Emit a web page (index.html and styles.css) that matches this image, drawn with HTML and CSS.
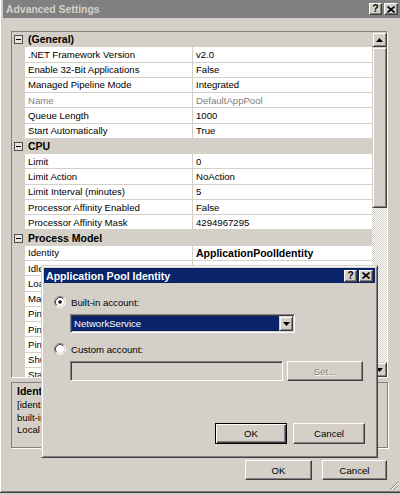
FILE: index.html
```html
<!DOCTYPE html>
<html>
<head>
<meta charset="utf-8">
<title>Advanced Settings</title>
<link rel="stylesheet" href="styles.css">
</head>
<body>
<div class="window">
  <div class="titlebar">
    <span class="title">Advanced Settings</span>
    <div class="caption-btns">
      <span class="cbtn help">?</span>
      <span class="cbtn close"><svg width="8" height="7" viewBox="0 0 8 7"><path d="M0.5 0.5 L7.5 6.5 M7.5 0.5 L0.5 6.5" stroke="#000" stroke-width="1.6"/></svg></span>
    </div>
  </div>

  <div class="main">
    <div class="grid">
      <div class="rows">
        <div class="row cat"><span class="gut"><i class="toggle"></i></span><span class="name">(General)</span></div>
        <div class="row"><span class="gut"></span><span class="name">.NET Framework Version</span><span class="val">v2.0</span></div>
        <div class="row"><span class="gut"></span><span class="name">Enable 32-Bit Applications</span><span class="val">False</span></div>
        <div class="row"><span class="gut"></span><span class="name">Managed Pipeline Mode</span><span class="val">Integrated</span></div>
        <div class="row ro"><span class="gut"></span><span class="name">Name</span><span class="val">DefaultAppPool</span></div>
        <div class="row"><span class="gut"></span><span class="name">Queue Length</span><span class="val">1000</span></div>
        <div class="row"><span class="gut"></span><span class="name">Start Automatically</span><span class="val">True</span></div>
        <div class="row cat"><span class="gut"><i class="toggle"></i></span><span class="name">CPU</span></div>
        <div class="row"><span class="gut"></span><span class="name">Limit</span><span class="val">0</span></div>
        <div class="row"><span class="gut"></span><span class="name">Limit Action</span><span class="val">NoAction</span></div>
        <div class="row"><span class="gut"></span><span class="name">Limit Interval (minutes)</span><span class="val">5</span></div>
        <div class="row"><span class="gut"></span><span class="name">Processor Affinity Enabled</span><span class="val">False</span></div>
        <div class="row"><span class="gut"></span><span class="name">Processor Affinity Mask</span><span class="val">4294967295</span></div>
        <div class="row cat"><span class="gut"><i class="toggle"></i></span><span class="name">Process Model</span></div>
        <div class="row"><span class="gut"></span><span class="name">Identity</span><span class="val strong">ApplicationPoolIdentity</span></div>
        <div class="row"><span class="gut"></span><span class="name">Idle Time-out (minutes)</span><span class="val">20</span></div>
        <div class="row"><span class="gut"></span><span class="name">Load User Profile</span><span class="val">False</span></div>
        <div class="row"><span class="gut"></span><span class="name">Maximum Worker Processes</span><span class="val">1</span></div>
        <div class="row"><span class="gut"></span><span class="name">Ping Enabled</span><span class="val">True</span></div>
        <div class="row"><span class="gut"></span><span class="name">Ping Maximum Response Time (seconds)</span><span class="val">90</span></div>
        <div class="row"><span class="gut"></span><span class="name">Ping Period (seconds)</span><span class="val">30</span></div>
        <div class="row"><span class="gut"></span><span class="name">Shutdown Time Limit (seconds)</span><span class="val">90</span></div>
        <div class="row"><span class="gut"></span><span class="name">Startup Time Limit (seconds)</span><span class="val">90</span></div>
      </div>
      <div class="vscroll">
        <div class="sbtn"><svg width="7" height="4" viewBox="0 0 7 4"><path d="M3.5 0 L7 4 L0 4 Z" fill="#000"/></svg></div>
        <div class="thumb"></div>
        <div class="track"></div>
        <div class="sbtn"><svg width="7" height="4" viewBox="0 0 7 4"><path d="M0 0 L7 0 L3.5 4 Z" fill="#000"/></svg></div>
      </div>
    </div>

    <div class="desc">
      <div class="desc-title">Identity</div>
      <div class="desc-line">[identityType, username, password] Configures the application pool to run as</div>
      <div class="desc-line">built-in account, i.e. Application Pool Identity (recommended), Network Service,</div>
      <div class="desc-line">Local System, Local Service, or as a specific user identity.</div>
    </div>

    <div class="actions">
      <button class="btn main-ok">OK</button>
      <button class="btn main-cancel">Cancel</button>
    </div>
  </div>

  <svg class="grip" width="10" height="10" viewBox="0 0 10 10">
    <path d="M9 1 L1 9 M9 5 L5 9" stroke="#808080" stroke-width="1"/>
    <path d="M9 2 L2 9 M9 6 L6 9" stroke="#fff" stroke-width="1"/>
  </svg>

  <div class="dialog">
    <div class="dtitle">
      <span>Application Pool Identity</span>
      <div class="caption-btns">
        <span class="cbtn dhelp">?</span>
        <span class="cbtn dclose"><svg width="8" height="7" viewBox="0 0 8 7"><path d="M0.5 0.5 L7.5 6.5 M7.5 0.5 L0.5 6.5" stroke="#000" stroke-width="1.6"/></svg></span>
      </div>
    </div>
    <div class="dbody">
      <div class="radio-row">
        <svg class="radio" width="12" height="12" viewBox="0 0 12 12">
          <circle cx="6" cy="6" r="5" fill="#fff"/>
          <path d="M2.11 9.89 A5.5 5.5 0 0 1 9.89 2.11" stroke="#808080" fill="none"/>
          <path d="M9.89 2.11 A5.5 5.5 0 0 1 2.11 9.89" stroke="#fff" fill="none"/>
          <path d="M2.82 9.18 A4.5 4.5 0 0 1 9.18 2.82" stroke="#404040" fill="none"/>
          <path d="M9.18 2.82 A4.5 4.5 0 0 1 2.82 9.18" stroke="#d4d0c8" fill="none"/>
          <circle cx="6" cy="6" r="1.8" fill="#000"/>
        </svg>
        <span>Built-in account:</span>
      </div>
      <div class="combo">
        <span class="combo-sel">NetworkService</span>
        <span class="combo-btn"><svg width="7" height="4" viewBox="0 0 7 4"><path d="M0 0 L7 0 L3.5 4 Z" fill="#000"/></svg></span>
      </div>
      <div class="radio-row second">
        <svg class="radio" width="12" height="12" viewBox="0 0 12 12">
          <circle cx="6" cy="6" r="5" fill="#fff"/>
          <path d="M2.11 9.89 A5.5 5.5 0 0 1 9.89 2.11" stroke="#808080" fill="none"/>
          <path d="M9.89 2.11 A5.5 5.5 0 0 1 2.11 9.89" stroke="#fff" fill="none"/>
          <path d="M2.82 9.18 A4.5 4.5 0 0 1 9.18 2.82" stroke="#404040" fill="none"/>
          <path d="M9.18 2.82 A4.5 4.5 0 0 1 2.82 9.18" stroke="#d4d0c8" fill="none"/>
        </svg>
        <span>Custom account:</span>
      </div>
      <div class="custom">
        <span class="textfield"></span>
        <button class="btn set" disabled>Set...</button>
      </div>
      <div class="dbtns">
        <button class="btn def">OK</button>
        <button class="btn dcancel">Cancel</button>
      </div>
    </div>
  </div>
</div>
</body>
</html>
```

FILE: styles.css
```css
html, body {
  margin: 0;
  padding: 0;
}
body {
  width: 400px;
  height: 495px;
  overflow: hidden;
  background: #d4d0c8;
  font-family: "Liberation Sans", Arial, sans-serif;
  font-size: 9.6px;
  color: #000;
}
.window {
  position: relative;
  width: 400px;
  height: 493px;
  box-sizing: border-box;
  border-bottom: 1px solid #404040;
  box-shadow: inset 1px 0 #ffffff, inset 0 -1px #808080;
  background: #d4d0c8;
}

/* title bars */
.titlebar {
  height: 18px;
  margin-left: 3px;
  background: #808080;
  display: flex;
  align-items: center;
  justify-content: space-between;
  padding: 0 2px 0 3px;
}
.title {
  color: #d4d0c8;
  font-weight: bold;
  font-size: 10.4px;
}
.caption-btns {
  display: flex;
  gap: 2px;
}
.cbtn {
  width: 14px;
  height: 12px;
  box-sizing: border-box;
  background: #d4d0c8;
  border: 1px solid;
  border-color: #ffffff #404040 #404040 #ffffff;
  box-shadow: inset -1px -1px #808080;
  display: flex;
  align-items: center;
  justify-content: center;
  font-weight: bold;
  font-size: 10px;
  line-height: 1;
  color: #000;
}
.cbtn.help, .cbtn.dhelp {
  width: 13px;
}

/* main area */
.main {
  padding: 13px 0 0 11px;
}
.grid {
  display: flex;
  width: 377px;
  height: 347px;
  box-sizing: border-box;
  border: 1px solid;
  border-color: #808080 #ffffff #ffffff #808080;
}
.rows {
  flex: 1;
  overflow: hidden;
  background: #d4d0c8;
}
.row {
  display: flex;
  height: 15.27px;
  white-space: nowrap;
}
.gut {
  flex: none;
  width: 13px;
  display: flex;
  align-items: center;
}
.name, .val {
  display: flex;
  align-items: center;
  box-sizing: border-box;
  padding-left: 3px;
  overflow: hidden;
  background: #ffffff;
  border-bottom: 1px solid #d4d0c8;
}
.name {
  flex: none;
  width: 168px;
  border-right: 1px solid #d4d0c8;
}
.val {
  flex: 1;
}
.row.cat .name {
  background: transparent;
  border-right: none;
  font-weight: bold;
  font-size: 10.5px;
  width: auto;
}
.row.ro .name, .row.ro .val {
  color: #808080;
}
.val.strong {
  font-weight: bold;
  font-size: 10.5px;
}
.toggle {
  display: block;
  position: relative;
  width: 9px;
  height: 9px;
  margin-left: 2px;
  box-sizing: border-box;
  border: 1px solid #505050;
  background: #e6e4df;
}
.toggle::after {
  content: "";
  position: absolute;
  left: 1px;
  top: 3px;
  width: 5px;
  height: 1px;
  background: #000;
}

/* scrollbar */
.vscroll {
  width: 15px;
  flex: none;
  display: flex;
  flex-direction: column;
}
.sbtn, .thumb {
  box-sizing: border-box;
  background: #d4d0c8;
  border: 1px solid;
  border-color: #d4d0c8 #404040 #404040 #d4d0c8;
  box-shadow: inset 1px 1px #ffffff, inset -1px -1px #808080;
}
.sbtn {
  height: 15px;
  display: flex;
  align-items: center;
  justify-content: center;
}
.thumb {
  height: 161px;
}
.track {
  flex: 1;
  background: repeating-conic-gradient(#ffffff 0 25%, #d4d0c8 0 50%) 0 0 / 2px 2px;
}

/* description */
.desc {
  margin-top: 4px;
  width: 377px;
  height: 66px;
  box-sizing: border-box;
  border: 1px solid #808080;
  box-shadow: 1px 1px 0 #ffffff;
  padding: 2px 5px;
  overflow: hidden;
  white-space: nowrap;
}
.desc-title {
  font-weight: bold;
  font-size: 10.5px;
  line-height: 13px;
  margin-bottom: 1px;
}
.desc-line {
  line-height: 12.5px;
}

/* buttons */
.btn {
  box-sizing: border-box;
  height: 20px;
  padding: 0;
  margin: 0;
  font-family: inherit;
  font-size: 9.6px;
  color: #000;
  background: #d4d0c8;
  border: 1px solid;
  border-color: #ffffff #404040 #404040 #ffffff;
  box-shadow: inset -1px -1px #808080;
}
.actions {
  margin-top: 12px;
  width: 376px;
  display: flex;
  justify-content: flex-end;
  gap: 10px;
}
.main-ok { width: 67px; }
.main-cancel { width: 65px; }

.grip {
  position: absolute;
  right: 1px;
  bottom: 1px;
}

/* dialog */
.dialog {
  position: absolute;
  left: 41px;
  top: 265px;
  width: 337px;
  height: 193px;
  box-sizing: border-box;
  background: #d4d0c8;
  border: 1px solid;
  border-color: #d4d0c8 #404040 #404040 #d4d0c8;
  box-shadow: inset 1px 1px #ffffff, inset -1px -1px #808080;
  padding: 2px;
}
.dtitle {
  height: 15px;
  background: #0a246a;
  color: #ffffff;
  font-weight: bold;
  font-size: 10.6px;
  display: flex;
  align-items: center;
  justify-content: space-between;
  padding: 0 2px 0 2px;
}
.dbody {
  padding: 13px 10px 0 10px;
}
.radio-row {
  display: flex;
  align-items: center;
  gap: 5px;
  height: 12px;
}
.radio-row.second {
  margin-top: 10px;
}
.radio {
  flex: none;
}
.combo {
  margin: 6px 0 0 16px;
  width: 225px;
  height: 19px;
  box-sizing: border-box;
  display: flex;
  border: 1px solid;
  border-color: #808080 #ffffff #ffffff #808080;
  box-shadow: inset 1px 1px #404040, inset -1px -1px #d4d0c8;
  background: #ffffff;
  padding: 1px;
}
.combo-sel {
  flex: 1;
  background: #0a246a;
  color: #ffffff;
  display: flex;
  align-items: center;
  padding-left: 2px;
}
.combo-btn {
  width: 14px;
  flex: none;
  box-sizing: border-box;
  background: #d4d0c8;
  border: 1px solid;
  border-color: #d4d0c8 #404040 #404040 #d4d0c8;
  box-shadow: inset 1px 1px #ffffff, inset -1px -1px #808080;
  display: flex;
  align-items: center;
  justify-content: center;
}
.custom {
  margin: 6px 0 0 16px;
  display: flex;
  gap: 4px;
}
.textfield {
  width: 213px;
  height: 20px;
  box-sizing: border-box;
  border: 1px solid;
  border-color: #808080 #ffffff #ffffff #808080;
  box-shadow: inset 1px 1px #404040, inset -1px -1px #d4d0c8;
  background: #d4d0c8;
}
.btn.set {
  width: 76px;
  color: #808080;
  text-shadow: 1px 1px 0 #ffffff;
}
.dbtns {
  margin-top: 42px;
  display: flex;
  justify-content: flex-end;
  gap: 6px;
}
.dbtns .btn {
  width: 72px;
  height: 21px;
}
.btn.def {
  border-color: #000;
  box-shadow: inset 1px 1px #ffffff, inset -1px -1px #404040, inset -2px -2px #808080;
}
```
